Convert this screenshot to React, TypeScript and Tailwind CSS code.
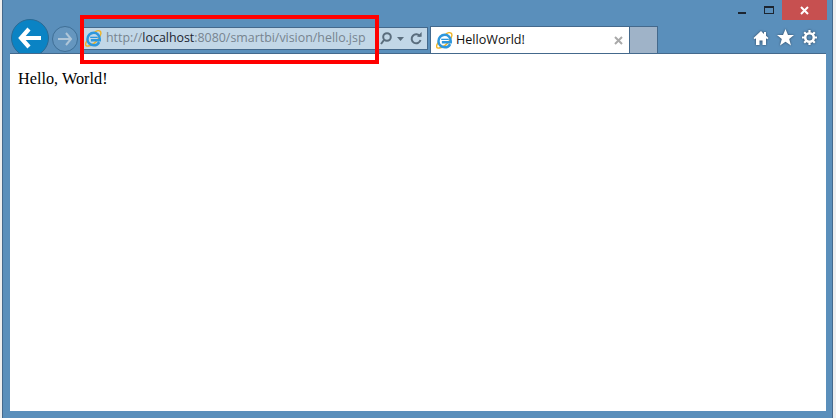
const uiFont = "font-['Open_Sans','Noto_Sans',sans-serif]";

function IeIcon({ className }: { className: string }) {
  return (
    <svg className={className} viewBox="0 0 18 18" fill="none">
      <path d="M2.600 10.400C-.6 15.400.4 17.600 3.400 17c3-.6 8-3.600 11-8 2.800-4 3.400-7.400.8-8.200-1.200-.4-3 .2-5 1.400" stroke="#f0b323" strokeWidth="1.500" />
      <path d="M15 12.800c-1 2-3.100 3.400-5.700 3.400C5.600 16.200 2.600 13.300 2.600 9.700S5.600 3 9.300 3c3.700 0 6.300 2.900 6.300 6.500v1.300H6.200" stroke="#2e97dc" strokeWidth="2.600" />
      <path d="M5.500 7.800h8" stroke="#2e97dc" strokeWidth="1.400" />
    </svg>
  );
}

function CaptionButtons() {
  return (
    <div className="flex justify-end items-start h-[27px] pr-[5px]">
      <div className="w-[8px] h-[2px] bg-[#1c2530] mt-[12px]" />
      <div className="w-[10px] h-[8px] ml-[18px] mt-[6px] border border-t-2 border-[#1c2530]" />
      <div className="w-[45px] h-[20px] ml-[8px] bg-[#c75050] flex items-center justify-center">
        <svg className="w-[9px] h-[9px]" viewBox="0 0 9 9">
          <path d="M1 1l7 7M8 1L1 8" stroke="white" strokeWidth="2" />
        </svg>
      </div>
    </div>
  );
}

function NavButtons() {
  return (
    <div className="flex items-center -mt-[8px] h-[38px]">
      <div className="w-[38px] h-[38px] rounded-full bg-[#0a83c4] border border-[#2a6a94] flex items-center justify-center">
        <svg className="w-[24px] h-[22px]" viewBox="0 0 24 22" fill="none">
          <path d="M11 2L3 11l8 9M4 11h19" stroke="white" strokeWidth="4.2" />
        </svg>
      </div>
      <div className="w-[26px] h-[26px] ml-[3px] mt-[2px] rounded-full bg-[#6596bf] border border-[#3f6f96] flex items-center justify-center">
        <svg className="w-[16px] h-[14px]" viewBox="0 0 16 14" fill="none">
          <path d="M9 1l5 6-5 6M14 7H1" stroke="#aec5d8" strokeWidth="2" />
        </svg>
      </div>
    </div>
  );
}

function AddressBar() {
  return (
    <div className="w-[346px] h-[23px] ml-[4px] bg-[#c2d7e7] border border-[#44698c] flex items-center">
      <IeIcon className="w-[17px] h-[17px] ml-[2px] shrink-0" />
      <span className={`ml-[4px] text-[12.4px] text-[#77848f] whitespace-nowrap ${uiFont}`}>
        http://<span className="text-[#1c2530]">localhost</span>:8080/smartbi/vision/hello.jsp
      </span>
      <div className="ml-auto flex items-center pr-[5px] gap-[5px]">
        <svg className="w-[12px] h-[13px] -ml-[2px]" viewBox="0 0 12 13" fill="none">
          <circle cx="7" cy="5" r="3.800" stroke="#5a6d7d" strokeWidth="2" />
          <path d="M4 8l-3 4" stroke="#5a6d7d" strokeWidth="2" />
        </svg>
        <svg className="w-[7px] h-[4px]" viewBox="0 0 7 4">
          <path d="M0 0h7L3.500 4z" fill="#5a6d7d" />
        </svg>
        <svg className="w-[12px] h-[13px] ml-[1px]" viewBox="0 0 12 13" fill="none">
          <path d="M10 4.500A4.500 4.500 0 1 0 10.500 8" stroke="#5a6d7d" strokeWidth="2" />
          <path d="M7 4.800h4.600V0z" fill="#5a6d7d" />
        </svg>
      </div>
    </div>
  );
}

function Tabs() {
  return (
    <div className="flex ml-[2px] -mt-[1px]">
      <div className="w-[200px] h-[28px] bg-white border border-b-0 border-[#44698c] flex items-center">
        <IeIcon className="w-[17px] h-[17px] ml-[5px] shrink-0" />
        <span className={`ml-[3px] text-[12.6px] text-[#111] ${uiFont}`}>HelloWorld!</span>
        <svg className="w-[9px] h-[9px] ml-auto mr-[6px]" viewBox="0 0 9 9">
          <path d="M1 1l7 7M8 1L1 8" stroke="#a9a9a9" strokeWidth="2" />
        </svg>
      </div>
      <div className="w-[28px] h-[28px] bg-[#9fb3c8] border border-l-0 border-b-0 border-[#44698c]" />
    </div>
  );
}

function ToolIcons() {
  return (
    <div className="ml-auto flex items-center gap-[8px] pr-[15px] pt-[2px]">
      <svg className="w-[16px] h-[16px] drop-shadow-[0_0_1px_#2b3f55]" viewBox="0 0 16 16">
        <path d="M8 1L.5 8l1.200 1.300L3 8.200V15h3.500v-4.500h3V15H13V8.200l1.300 1.100L15.500 8 13 5.700V2h-2v1.900z" fill="white" />
      </svg>
      <svg className="w-[17px] h-[17px] drop-shadow-[0_0_1px_#2b3f55]" viewBox="0 0 17 17">
        <path d="M8.500 0l2.500 6h6l-4.800 3.900 1.800 6.600-5.500-3.800-5.500 3.800 1.800-6.600L0 6h6z" fill="white" />
      </svg>
      <svg className="w-[15px] h-[15px] drop-shadow-[0_0_1px_#2b3f55]" viewBox="0 0 15 15" fill="none">
        <circle cx="7.500" cy="7.500" r="4.300" stroke="white" strokeWidth="2.600" />
        <path d="M7.500 0v15M0 7.500h15M2.200 2.200l10.600 10.600M12.800 2.200L2.200 12.800" stroke="white" strokeWidth="2.200" strokeDasharray="2.600 9.800 2.600 0" />
      </svg>
    </div>
  );
}

export default function App() {
  return (
    <div className="w-[836px] h-[418px] bg-[#eeeeee] pl-[2px] pr-[3px] overflow-hidden relative">
      <div className="h-[418px] bg-[#5a8fbb] border-l border-r border-[#44698c] flex flex-col">
        <CaptionButtons />
        <div className="flex items-start h-[26px] pl-[8px]">
          <NavButtons />
          <AddressBar />
          <Tabs />
          <ToolIcons />
        </div>
        <div className="relative flex-1 ml-[7px] mr-[6px] mb-[7px] bg-white border-t border-[#44698c] p-[8px] pt-[13px] font-['Liberation_Serif',serif] text-[16.25px] text-black">
          Hello, World!
        </div>
      </div>
      {/* red annotation drawn over the screenshot */}
      <div className="absolute left-[80px] top-[15px] w-[299px] h-[49px] border-[4px] border-[#ff0000]" />
    </div>
  );
}
